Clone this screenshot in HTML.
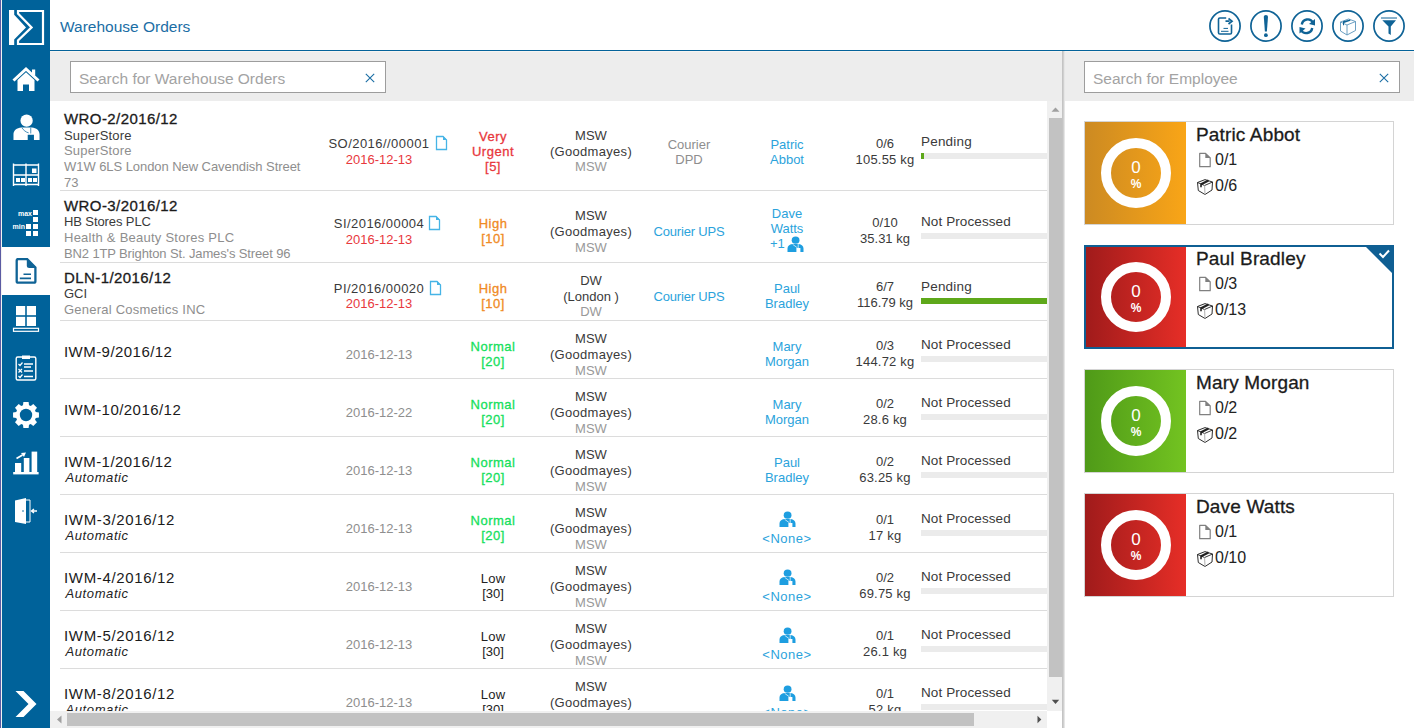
<!DOCTYPE html><html><head><meta charset="utf-8"><style>
*{margin:0;padding:0;box-sizing:border-box}
html,body{width:1414px;height:728px;overflow:hidden;background:#fff;font-family:"Liberation Sans", sans-serif;}
.a{position:absolute;white-space:nowrap}
.c{position:absolute;white-space:nowrap;text-align:center;transform:translateX(-50%)}
.t13{font-size:13px;line-height:16px}
</style></head><body>
<div class="a" style="left:0;top:0;width:50px;height:728px;background:#00629a"></div>
<div class="a" style="left:0;top:0;width:1px;height:728px;background:#5b5ba3"></div>
<div class="a" style="left:1px;top:0;width:1px;height:728px;background:#f2f2f2"></div>
<div class="a" style="left:2px;top:247px;width:48px;height:48px;background:#fff"></div>
<div class="a" style="left:60px;top:17px;font-size:15.5px;color:#1b6ea5;line-height:20px">Warehouse Orders</div>
<div class="a" style="left:50px;top:50px;width:1364px;height:1px;background:#04639a"></div>
<div class="a" style="left:50px;top:51px;width:1364px;height:1px;background:#f7f4f1"></div>
<div class="a" style="left:50px;top:52px;width:1364px;height:49px;background:#ededed"></div>
<div class="a" style="left:70px;top:61px;width:316px;height:32px;background:#fff;border:1px solid #9d9d9d"></div>
<div class="a" style="left:79px;top:70px;font-size:15.5px;line-height:18px;color:#a3a3a3">Search for Warehouse Orders</div>
<svg class="a" style="left:365px;top:73px" width="10" height="10" viewBox="0 0 10 10"><path d="M0.8 0.8L9.2 9.2M9.2 0.8L0.8 9.2" stroke="#1b6ea5" stroke-width="1.1"/></svg>
<div class="a" style="left:1084px;top:61px;width:316px;height:32px;background:#fff;border:1px solid #9d9d9d"></div>
<div class="a" style="left:1093px;top:70px;font-size:15.5px;line-height:18px;color:#a3a3a3">Search for Employee</div>
<svg class="a" style="left:1379px;top:73px" width="10" height="10" viewBox="0 0 10 10"><path d="M0.8 0.8L9.2 9.2M9.2 0.8L0.8 9.2" stroke="#1b6ea5" stroke-width="1.1"/></svg>
<div class="a" style="left:1062px;top:51px;width:1px;height:677px;background:#c4c4c4"></div>
<div class="a" style="left:1063px;top:51px;width:1px;height:677px;background:#d0d0d0"></div>
<div class="a" style="left:1064px;top:51px;width:1px;height:677px;background:#e6e6e6"></div>
<div class="a" style="left:60px;top:190px;width:987px;height:1px;background:#dcdcdc"></div>
<div class="a" style="left:60px;top:262px;width:987px;height:1px;background:#dcdcdc"></div>
<div class="a" style="left:60px;top:320px;width:987px;height:1px;background:#dcdcdc"></div>
<div class="a" style="left:60px;top:378px;width:987px;height:1px;background:#dcdcdc"></div>
<div class="a" style="left:60px;top:436px;width:987px;height:1px;background:#dcdcdc"></div>
<div class="a" style="left:60px;top:494px;width:987px;height:1px;background:#dcdcdc"></div>
<div class="a" style="left:60px;top:552px;width:987px;height:1px;background:#dcdcdc"></div>
<div class="a" style="left:60px;top:610px;width:987px;height:1px;background:#dcdcdc"></div>
<div class="a" style="left:60px;top:668px;width:987px;height:1px;background:#dcdcdc"></div>
<div class="a" style="left:50px;top:101px;width:997px;height:610px;overflow:hidden">
<div class="a" style="left:-50px;top:-101px;width:1414px;height:728px">
<div class="a" style="left:60px;top:190px;width:987px;height:1px;background:#dcdcdc"></div>
<div class="a" style="left:60px;top:262px;width:987px;height:1px;background:#dcdcdc"></div>
<div class="a" style="left:60px;top:320px;width:987px;height:1px;background:#dcdcdc"></div>
<div class="a" style="left:60px;top:378px;width:987px;height:1px;background:#dcdcdc"></div>
<div class="a" style="left:60px;top:436px;width:987px;height:1px;background:#dcdcdc"></div>
<div class="a" style="left:60px;top:494px;width:987px;height:1px;background:#dcdcdc"></div>
<div class="a" style="left:60px;top:552px;width:987px;height:1px;background:#dcdcdc"></div>
<div class="a" style="left:60px;top:610px;width:987px;height:1px;background:#dcdcdc"></div>
<div class="a" style="left:60px;top:668px;width:987px;height:1px;background:#dcdcdc"></div>
<div class="a" style="left:64px;top:111px;font-size:15px;line-height:15px;color:#1b1b1b;-webkit-text-stroke:0.3px currentColor;letter-spacing:0.42px">WRO-2/2016/12</div>
<div class="a" style="left:64px;top:129px;font-size:13px;line-height:13px;color:#3a3a3a;letter-spacing:0.2px">SuperStore</div>
<div class="a" style="left:64px;top:144px;font-size:13px;line-height:13px;color:#8e8e8e;letter-spacing:0.2px">SuperStore</div>
<div class="a" style="left:64px;top:160px;font-size:13px;line-height:13px;color:#8e8e8e;letter-spacing:-0.06px">W1W 6LS London New Cavendish Street</div>
<div class="a" style="left:64px;top:176px;font-size:13px;line-height:13px;color:#8e8e8e;">73</div>
<div class="a" style="left:279.0px;width:200px;text-align:center;top:137px;font-size:13px;line-height:13px;color:#3a3a3a;letter-spacing:0.45px">SO/2016//00001</div>
<svg class="a" style="left:435px;top:135px" width="13" height="16" viewBox="0 0 13 16"><path d="M1.5 1.5H8L11.5 5V14.5H1.5Z" fill="none" stroke="#46b4e6" stroke-width="1.3"/><path d="M8 1L12 5H8Z" fill="#46b4e6"/></svg>
<div class="a" style="left:279.0px;width:200px;text-align:center;top:153px;font-size:13px;line-height:13px;color:#e8383d;">2016-12-13</div>
<div class="a" style="left:393.0px;width:200px;text-align:center;top:130px;font-size:13px;line-height:13px;color:#e8383d;-webkit-text-stroke:0.3px currentColor;letter-spacing:0.5px">Very</div>
<div class="a" style="left:393.0px;width:200px;text-align:center;top:145px;font-size:13px;line-height:13px;color:#e8383d;-webkit-text-stroke:0.3px currentColor;letter-spacing:0.5px">Urgent</div>
<div class="a" style="left:393.0px;width:200px;text-align:center;top:160px;font-size:13px;line-height:13px;color:#e8383d;-webkit-text-stroke:0.3px currentColor;letter-spacing:0.5px">[5]</div>
<div class="a" style="left:491.0px;width:200px;text-align:center;top:129px;font-size:13px;line-height:13px;color:#3a3a3a;">MSW</div>
<div class="a" style="left:491.0px;width:200px;text-align:center;top:145px;font-size:13px;line-height:13px;color:#3a3a3a;letter-spacing:0.3px">(Goodmayes)</div>
<div class="a" style="left:491.0px;width:200px;text-align:center;top:160px;font-size:13px;line-height:13px;color:#999;">MSW</div>
<div class="a" style="left:589.0px;width:200px;text-align:center;top:138px;font-size:13px;line-height:13px;color:#8e8e8e;">Courier</div>
<div class="a" style="left:589.0px;width:200px;text-align:center;top:153px;font-size:13px;line-height:13px;color:#8e8e8e;">DPD</div>
<div class="a" style="left:687.0px;width:200px;text-align:center;top:138px;font-size:13px;line-height:13px;color:#2ba3dc;">Patric</div>
<div class="a" style="left:687.0px;width:200px;text-align:center;top:153px;font-size:13px;line-height:13px;color:#2ba3dc;">Abbot</div>
<div class="a" style="left:785.0px;width:200px;text-align:center;top:137px;font-size:13px;line-height:13px;color:#3a3a3a;">0/6</div>
<div class="a" style="left:785.0px;width:200px;text-align:center;top:153px;font-size:13px;line-height:13px;color:#3a3a3a;letter-spacing:0.2px">105.55 kg</div>
<div class="a" style="left:921px;top:135px;font-size:13.5px;line-height:13.5px;color:#3a3a3a;letter-spacing:0.2px">Pending</div>
<div class="a" style="left:921px;top:153px;width:126px;height:6px;background:#ebebeb"></div>
<div class="a" style="left:921px;top:153px;width:3px;height:6px;background:#5ea81a"></div>
<div class="a" style="left:64px;top:198px;font-size:15px;line-height:15px;color:#1b1b1b;-webkit-text-stroke:0.3px currentColor;letter-spacing:0.42px">WRO-3/2016/12</div>
<div class="a" style="left:64px;top:215px;font-size:13px;line-height:13px;color:#3a3a3a;letter-spacing:-0.1px">HB Stores PLC</div>
<div class="a" style="left:64px;top:231px;font-size:13px;line-height:13px;color:#8e8e8e;letter-spacing:0.24px">Health &amp; Beauty Stores PLC</div>
<div class="a" style="left:64px;top:247px;font-size:13px;line-height:13px;color:#8e8e8e;letter-spacing:-0.13px">BN2 1TP Brighton St. James's Street 96</div>
<div class="a" style="left:279.0px;width:200px;text-align:center;top:217px;font-size:13px;line-height:13px;color:#3a3a3a;letter-spacing:0.45px">SI/2016/00004</div>
<svg class="a" style="left:428px;top:215px" width="13" height="16" viewBox="0 0 13 16"><path d="M1.5 1.5H8L11.5 5V14.5H1.5Z" fill="none" stroke="#46b4e6" stroke-width="1.3"/><path d="M8 1L12 5H8Z" fill="#46b4e6"/></svg>
<div class="a" style="left:279.0px;width:200px;text-align:center;top:233px;font-size:13px;line-height:13px;color:#e8383d;">2016-12-13</div>
<div class="a" style="left:393.0px;width:200px;text-align:center;top:217px;font-size:13px;line-height:13px;color:#f08a24;-webkit-text-stroke:0.3px currentColor;letter-spacing:0.5px">High</div>
<div class="a" style="left:393.0px;width:200px;text-align:center;top:232px;font-size:13px;line-height:13px;color:#f08a24;-webkit-text-stroke:0.3px currentColor;letter-spacing:0.5px">[10]</div>
<div class="a" style="left:491.0px;width:200px;text-align:center;top:209px;font-size:13px;line-height:13px;color:#3a3a3a;">MSW</div>
<div class="a" style="left:491.0px;width:200px;text-align:center;top:225px;font-size:13px;line-height:13px;color:#3a3a3a;letter-spacing:0.3px">(Goodmayes)</div>
<div class="a" style="left:491.0px;width:200px;text-align:center;top:241px;font-size:13px;line-height:13px;color:#999;">MSW</div>
<div class="a" style="left:589.0px;width:200px;text-align:center;top:225px;font-size:13px;line-height:13px;color:#2ba3dc;letter-spacing:-0.2px">Courier UPS</div>
<div class="a" style="left:687.0px;width:200px;text-align:center;top:207px;font-size:13px;line-height:13px;color:#2ba3dc;">Dave</div>
<div class="a" style="left:687.0px;width:200px;text-align:center;top:222px;font-size:13px;line-height:13px;color:#2ba3dc;">Watts</div>
<div class="a" style="left:770px;top:237px;font-size:13px;line-height:13px;color:#2ba3dc;">+1</div>
<svg class="a" style="left:786.5px;top:236px" width="17" height="17" viewBox="0 0 17 17"><ellipse cx="8.6" cy="4.2" rx="3.9" ry="3.6" fill="#1e9ee0"/><path d="M0.5 15.9V12.6C0.5 10 2.5 8.2 5.3 8H11.7C14.5 8.2 16.5 10 16.5 12.6V15.9H13.4V12.1H9.4V15.9Z" fill="#1e9ee0"/><path d="M5.6 8.3L10.4 11.8M11.2 8V12" stroke="#fff" stroke-width="0.7" fill="none"/></svg>
<div class="a" style="left:785.0px;width:200px;text-align:center;top:216px;font-size:13px;line-height:13px;color:#3a3a3a;">0/10</div>
<div class="a" style="left:785.0px;width:200px;text-align:center;top:232px;font-size:13px;line-height:13px;color:#3a3a3a;">35.31 kg</div>
<div class="a" style="left:921px;top:215px;font-size:13.5px;line-height:13.5px;color:#3a3a3a;letter-spacing:0.1px">Not Processed</div>
<div class="a" style="left:921px;top:233px;width:126px;height:6px;background:#ebebeb"></div>
<div class="a" style="left:64px;top:270px;font-size:15px;line-height:15px;color:#1b1b1b;-webkit-text-stroke:0.3px currentColor;letter-spacing:0.42px">DLN-1/2016/12</div>
<div class="a" style="left:64px;top:287px;font-size:13px;line-height:13px;color:#3a3a3a;">GCI</div>
<div class="a" style="left:64px;top:303px;font-size:13px;line-height:13px;color:#8e8e8e;letter-spacing:0.23px">General Cosmetics INC</div>
<div class="a" style="left:279.0px;width:200px;text-align:center;top:282px;font-size:13px;line-height:13px;color:#3a3a3a;letter-spacing:0.45px">PI/2016/00020</div>
<svg class="a" style="left:429px;top:280px" width="13" height="16" viewBox="0 0 13 16"><path d="M1.5 1.5H8L11.5 5V14.5H1.5Z" fill="none" stroke="#46b4e6" stroke-width="1.3"/><path d="M8 1L12 5H8Z" fill="#46b4e6"/></svg>
<div class="a" style="left:279.0px;width:200px;text-align:center;top:297px;font-size:13px;line-height:13px;color:#e8383d;">2016-12-13</div>
<div class="a" style="left:393.0px;width:200px;text-align:center;top:282px;font-size:13px;line-height:13px;color:#f08a24;-webkit-text-stroke:0.3px currentColor;letter-spacing:0.5px">High</div>
<div class="a" style="left:393.0px;width:200px;text-align:center;top:297px;font-size:13px;line-height:13px;color:#f08a24;-webkit-text-stroke:0.3px currentColor;letter-spacing:0.5px">[10]</div>
<div class="a" style="left:491.0px;width:200px;text-align:center;top:274px;font-size:13px;line-height:13px;color:#3a3a3a;">DW</div>
<div class="a" style="left:491.0px;width:200px;text-align:center;top:290px;font-size:13px;line-height:13px;color:#3a3a3a;">(London )</div>
<div class="a" style="left:491.0px;width:200px;text-align:center;top:305px;font-size:13px;line-height:13px;color:#999;">DW</div>
<div class="a" style="left:589.0px;width:200px;text-align:center;top:290px;font-size:13px;line-height:13px;color:#2ba3dc;letter-spacing:-0.2px">Courier UPS</div>
<div class="a" style="left:687.0px;width:200px;text-align:center;top:282px;font-size:13px;line-height:13px;color:#2ba3dc;">Paul</div>
<div class="a" style="left:687.0px;width:200px;text-align:center;top:297px;font-size:13px;line-height:13px;color:#2ba3dc;">Bradley</div>
<div class="a" style="left:785.0px;width:200px;text-align:center;top:280px;font-size:13px;line-height:13px;color:#3a3a3a;">6/7</div>
<div class="a" style="left:785.0px;width:200px;text-align:center;top:296px;font-size:13px;line-height:13px;color:#3a3a3a;">116.79 kg</div>
<div class="a" style="left:921px;top:280px;font-size:13.5px;line-height:13.5px;color:#3a3a3a;letter-spacing:0.2px">Pending</div>
<div class="a" style="left:921px;top:298px;width:126px;height:6px;background:#ebebeb"></div>
<div class="a" style="left:921px;top:298px;width:126px;height:6px;background:#5ea81a"></div>
<div class="a" style="left:64px;top:344px;font-size:15px;line-height:15px;color:#1b1b1b;letter-spacing:0.45px">IWM-9/2016/12</div>
<div class="a" style="left:279.0px;width:200px;text-align:center;top:348px;font-size:13px;line-height:13px;color:#8e8e8e;">2016-12-13</div>
<div class="a" style="left:393.0px;width:200px;text-align:center;top:340px;font-size:13px;line-height:13px;color:#14e05c;-webkit-text-stroke:0.3px currentColor;letter-spacing:0.5px">Normal</div>
<div class="a" style="left:393.0px;width:200px;text-align:center;top:355px;font-size:13px;line-height:13px;color:#14e05c;-webkit-text-stroke:0.3px currentColor;letter-spacing:0.5px">[20]</div>
<div class="a" style="left:491.0px;width:200px;text-align:center;top:332px;font-size:13px;line-height:13px;color:#3a3a3a;">MSW</div>
<div class="a" style="left:491.0px;width:200px;text-align:center;top:348px;font-size:13px;line-height:13px;color:#3a3a3a;letter-spacing:0.3px">(Goodmayes)</div>
<div class="a" style="left:491.0px;width:200px;text-align:center;top:364px;font-size:13px;line-height:13px;color:#999;">MSW</div>
<div class="a" style="left:687.0px;width:200px;text-align:center;top:340px;font-size:13px;line-height:13px;color:#2ba3dc;">Mary</div>
<div class="a" style="left:687.0px;width:200px;text-align:center;top:355px;font-size:13px;line-height:13px;color:#2ba3dc;">Morgan</div>
<div class="a" style="left:785.0px;width:200px;text-align:center;top:339px;font-size:13px;line-height:13px;color:#3a3a3a;">0/3</div>
<div class="a" style="left:785.0px;width:200px;text-align:center;top:355px;font-size:13px;line-height:13px;color:#3a3a3a;letter-spacing:0.2px">144.72 kg</div>
<div class="a" style="left:921px;top:338px;font-size:13.5px;line-height:13.5px;color:#3a3a3a;letter-spacing:0.1px">Not Processed</div>
<div class="a" style="left:921px;top:356px;width:126px;height:6px;background:#ebebeb"></div>
<div class="a" style="left:64px;top:402px;font-size:15px;line-height:15px;color:#1b1b1b;letter-spacing:0.45px">IWM-10/2016/12</div>
<div class="a" style="left:279.0px;width:200px;text-align:center;top:406px;font-size:13px;line-height:13px;color:#8e8e8e;">2016-12-22</div>
<div class="a" style="left:393.0px;width:200px;text-align:center;top:398px;font-size:13px;line-height:13px;color:#14e05c;-webkit-text-stroke:0.3px currentColor;letter-spacing:0.5px">Normal</div>
<div class="a" style="left:393.0px;width:200px;text-align:center;top:413px;font-size:13px;line-height:13px;color:#14e05c;-webkit-text-stroke:0.3px currentColor;letter-spacing:0.5px">[20]</div>
<div class="a" style="left:491.0px;width:200px;text-align:center;top:390px;font-size:13px;line-height:13px;color:#3a3a3a;">MSW</div>
<div class="a" style="left:491.0px;width:200px;text-align:center;top:406px;font-size:13px;line-height:13px;color:#3a3a3a;letter-spacing:0.3px">(Goodmayes)</div>
<div class="a" style="left:491.0px;width:200px;text-align:center;top:422px;font-size:13px;line-height:13px;color:#999;">MSW</div>
<div class="a" style="left:687.0px;width:200px;text-align:center;top:398px;font-size:13px;line-height:13px;color:#2ba3dc;">Mary</div>
<div class="a" style="left:687.0px;width:200px;text-align:center;top:413px;font-size:13px;line-height:13px;color:#2ba3dc;">Morgan</div>
<div class="a" style="left:785.0px;width:200px;text-align:center;top:397px;font-size:13px;line-height:13px;color:#3a3a3a;">0/2</div>
<div class="a" style="left:785.0px;width:200px;text-align:center;top:413px;font-size:13px;line-height:13px;color:#3a3a3a;letter-spacing:0.2px">28.6 kg</div>
<div class="a" style="left:921px;top:396px;font-size:13.5px;line-height:13.5px;color:#3a3a3a;letter-spacing:0.1px">Not Processed</div>
<div class="a" style="left:921px;top:414px;width:126px;height:6px;background:#ebebeb"></div>
<div class="a" style="left:64px;top:454px;font-size:15px;line-height:15px;color:#1b1b1b;letter-spacing:0.45px">IWM-1/2016/12</div>
<div class="a" style="left:65.5px;top:471px;font-size:13px;line-height:13px;color:#222;font-style:italic;letter-spacing:0.6px">Automatic</div>
<div class="a" style="left:279.0px;width:200px;text-align:center;top:464px;font-size:13px;line-height:13px;color:#8e8e8e;">2016-12-13</div>
<div class="a" style="left:393.0px;width:200px;text-align:center;top:456px;font-size:13px;line-height:13px;color:#14e05c;-webkit-text-stroke:0.3px currentColor;letter-spacing:0.5px">Normal</div>
<div class="a" style="left:393.0px;width:200px;text-align:center;top:471px;font-size:13px;line-height:13px;color:#14e05c;-webkit-text-stroke:0.3px currentColor;letter-spacing:0.5px">[20]</div>
<div class="a" style="left:491.0px;width:200px;text-align:center;top:448px;font-size:13px;line-height:13px;color:#3a3a3a;">MSW</div>
<div class="a" style="left:491.0px;width:200px;text-align:center;top:464px;font-size:13px;line-height:13px;color:#3a3a3a;letter-spacing:0.3px">(Goodmayes)</div>
<div class="a" style="left:491.0px;width:200px;text-align:center;top:480px;font-size:13px;line-height:13px;color:#999;">MSW</div>
<div class="a" style="left:687.0px;width:200px;text-align:center;top:456px;font-size:13px;line-height:13px;color:#2ba3dc;">Paul</div>
<div class="a" style="left:687.0px;width:200px;text-align:center;top:471px;font-size:13px;line-height:13px;color:#2ba3dc;">Bradley</div>
<div class="a" style="left:785.0px;width:200px;text-align:center;top:455px;font-size:13px;line-height:13px;color:#3a3a3a;">0/2</div>
<div class="a" style="left:785.0px;width:200px;text-align:center;top:471px;font-size:13px;line-height:13px;color:#3a3a3a;letter-spacing:0.2px">63.25 kg</div>
<div class="a" style="left:921px;top:454px;font-size:13.5px;line-height:13.5px;color:#3a3a3a;letter-spacing:0.1px">Not Processed</div>
<div class="a" style="left:921px;top:472px;width:126px;height:6px;background:#ebebeb"></div>
<div class="a" style="left:64px;top:512px;font-size:15px;line-height:15px;color:#1b1b1b;letter-spacing:0.65px">IWM-3/2016/12</div>
<div class="a" style="left:65.5px;top:529px;font-size:13px;line-height:13px;color:#222;font-style:italic;letter-spacing:0.6px">Automatic</div>
<div class="a" style="left:279.0px;width:200px;text-align:center;top:522px;font-size:13px;line-height:13px;color:#8e8e8e;">2016-12-13</div>
<div class="a" style="left:393.0px;width:200px;text-align:center;top:514px;font-size:13px;line-height:13px;color:#14e05c;-webkit-text-stroke:0.3px currentColor;letter-spacing:0.5px">Normal</div>
<div class="a" style="left:393.0px;width:200px;text-align:center;top:529px;font-size:13px;line-height:13px;color:#14e05c;-webkit-text-stroke:0.3px currentColor;letter-spacing:0.5px">[20]</div>
<div class="a" style="left:491.0px;width:200px;text-align:center;top:506px;font-size:13px;line-height:13px;color:#3a3a3a;">MSW</div>
<div class="a" style="left:491.0px;width:200px;text-align:center;top:522px;font-size:13px;line-height:13px;color:#3a3a3a;letter-spacing:0.3px">(Goodmayes)</div>
<div class="a" style="left:491.0px;width:200px;text-align:center;top:538px;font-size:13px;line-height:13px;color:#999;">MSW</div>
<svg class="a" style="left:778.5px;top:511px" width="17" height="17" viewBox="0 0 17 17"><ellipse cx="8.6" cy="4.2" rx="3.9" ry="3.6" fill="#1e9ee0"/><path d="M0.5 15.9V12.6C0.5 10 2.5 8.2 5.3 8H11.7C14.5 8.2 16.5 10 16.5 12.6V15.9H13.4V12.1H9.4V15.9Z" fill="#1e9ee0"/><path d="M5.6 8.3L10.4 11.8M11.2 8V12" stroke="#fff" stroke-width="0.7" fill="none"/></svg>
<div class="a" style="left:687.0px;width:200px;text-align:center;top:532px;font-size:13px;line-height:13px;color:#2ba3dc;letter-spacing:0.5px">&lt;None&gt;</div>
<div class="a" style="left:785.0px;width:200px;text-align:center;top:513px;font-size:13px;line-height:13px;color:#3a3a3a;">0/1</div>
<div class="a" style="left:785.0px;width:200px;text-align:center;top:529px;font-size:13px;line-height:13px;color:#3a3a3a;letter-spacing:0.2px">17 kg</div>
<div class="a" style="left:921px;top:512px;font-size:13.5px;line-height:13.5px;color:#3a3a3a;letter-spacing:0.1px">Not Processed</div>
<div class="a" style="left:921px;top:530px;width:126px;height:6px;background:#ebebeb"></div>
<div class="a" style="left:64px;top:570px;font-size:15px;line-height:15px;color:#1b1b1b;letter-spacing:0.65px">IWM-4/2016/12</div>
<div class="a" style="left:65.5px;top:587px;font-size:13px;line-height:13px;color:#222;font-style:italic;letter-spacing:0.6px">Automatic</div>
<div class="a" style="left:279.0px;width:200px;text-align:center;top:580px;font-size:13px;line-height:13px;color:#8e8e8e;">2016-12-13</div>
<div class="a" style="left:393.0px;width:200px;text-align:center;top:572px;font-size:13px;line-height:13px;color:#222;letter-spacing:0.3px">Low</div>
<div class="a" style="left:393.0px;width:200px;text-align:center;top:587px;font-size:13px;line-height:13px;color:#222;">[30]</div>
<div class="a" style="left:491.0px;width:200px;text-align:center;top:564px;font-size:13px;line-height:13px;color:#3a3a3a;">MSW</div>
<div class="a" style="left:491.0px;width:200px;text-align:center;top:580px;font-size:13px;line-height:13px;color:#3a3a3a;letter-spacing:0.3px">(Goodmayes)</div>
<div class="a" style="left:491.0px;width:200px;text-align:center;top:596px;font-size:13px;line-height:13px;color:#999;">MSW</div>
<svg class="a" style="left:778.5px;top:569px" width="17" height="17" viewBox="0 0 17 17"><ellipse cx="8.6" cy="4.2" rx="3.9" ry="3.6" fill="#1e9ee0"/><path d="M0.5 15.9V12.6C0.5 10 2.5 8.2 5.3 8H11.7C14.5 8.2 16.5 10 16.5 12.6V15.9H13.4V12.1H9.4V15.9Z" fill="#1e9ee0"/><path d="M5.6 8.3L10.4 11.8M11.2 8V12" stroke="#fff" stroke-width="0.7" fill="none"/></svg>
<div class="a" style="left:687.0px;width:200px;text-align:center;top:590px;font-size:13px;line-height:13px;color:#2ba3dc;letter-spacing:0.5px">&lt;None&gt;</div>
<div class="a" style="left:785.0px;width:200px;text-align:center;top:571px;font-size:13px;line-height:13px;color:#3a3a3a;">0/2</div>
<div class="a" style="left:785.0px;width:200px;text-align:center;top:587px;font-size:13px;line-height:13px;color:#3a3a3a;letter-spacing:0.2px">69.75 kg</div>
<div class="a" style="left:921px;top:570px;font-size:13.5px;line-height:13.5px;color:#3a3a3a;letter-spacing:0.1px">Not Processed</div>
<div class="a" style="left:921px;top:588px;width:126px;height:6px;background:#ebebeb"></div>
<div class="a" style="left:64px;top:628px;font-size:15px;line-height:15px;color:#1b1b1b;letter-spacing:0.65px">IWM-5/2016/12</div>
<div class="a" style="left:65.5px;top:645px;font-size:13px;line-height:13px;color:#222;font-style:italic;letter-spacing:0.6px">Automatic</div>
<div class="a" style="left:279.0px;width:200px;text-align:center;top:638px;font-size:13px;line-height:13px;color:#8e8e8e;">2016-12-13</div>
<div class="a" style="left:393.0px;width:200px;text-align:center;top:630px;font-size:13px;line-height:13px;color:#222;letter-spacing:0.3px">Low</div>
<div class="a" style="left:393.0px;width:200px;text-align:center;top:645px;font-size:13px;line-height:13px;color:#222;">[30]</div>
<div class="a" style="left:491.0px;width:200px;text-align:center;top:622px;font-size:13px;line-height:13px;color:#3a3a3a;">MSW</div>
<div class="a" style="left:491.0px;width:200px;text-align:center;top:638px;font-size:13px;line-height:13px;color:#3a3a3a;letter-spacing:0.3px">(Goodmayes)</div>
<div class="a" style="left:491.0px;width:200px;text-align:center;top:654px;font-size:13px;line-height:13px;color:#999;">MSW</div>
<svg class="a" style="left:778.5px;top:627px" width="17" height="17" viewBox="0 0 17 17"><ellipse cx="8.6" cy="4.2" rx="3.9" ry="3.6" fill="#1e9ee0"/><path d="M0.5 15.9V12.6C0.5 10 2.5 8.2 5.3 8H11.7C14.5 8.2 16.5 10 16.5 12.6V15.9H13.4V12.1H9.4V15.9Z" fill="#1e9ee0"/><path d="M5.6 8.3L10.4 11.8M11.2 8V12" stroke="#fff" stroke-width="0.7" fill="none"/></svg>
<div class="a" style="left:687.0px;width:200px;text-align:center;top:648px;font-size:13px;line-height:13px;color:#2ba3dc;letter-spacing:0.5px">&lt;None&gt;</div>
<div class="a" style="left:785.0px;width:200px;text-align:center;top:629px;font-size:13px;line-height:13px;color:#3a3a3a;">0/1</div>
<div class="a" style="left:785.0px;width:200px;text-align:center;top:645px;font-size:13px;line-height:13px;color:#3a3a3a;letter-spacing:0.2px">26.1 kg</div>
<div class="a" style="left:921px;top:628px;font-size:13.5px;line-height:13.5px;color:#3a3a3a;letter-spacing:0.1px">Not Processed</div>
<div class="a" style="left:921px;top:646px;width:126px;height:6px;background:#ebebeb"></div>
<div class="a" style="left:64px;top:686px;font-size:15px;line-height:15px;color:#1b1b1b;letter-spacing:0.65px">IWM-8/2016/12</div>
<div class="a" style="left:65.5px;top:703px;font-size:13px;line-height:13px;color:#222;font-style:italic;letter-spacing:0.6px">Automatic</div>
<div class="a" style="left:279.0px;width:200px;text-align:center;top:696px;font-size:13px;line-height:13px;color:#8e8e8e;">2016-12-13</div>
<div class="a" style="left:393.0px;width:200px;text-align:center;top:688px;font-size:13px;line-height:13px;color:#222;letter-spacing:0.3px">Low</div>
<div class="a" style="left:393.0px;width:200px;text-align:center;top:703px;font-size:13px;line-height:13px;color:#222;">[30]</div>
<div class="a" style="left:491.0px;width:200px;text-align:center;top:680px;font-size:13px;line-height:13px;color:#3a3a3a;">MSW</div>
<div class="a" style="left:491.0px;width:200px;text-align:center;top:696px;font-size:13px;line-height:13px;color:#3a3a3a;letter-spacing:0.3px">(Goodmayes)</div>
<div class="a" style="left:491.0px;width:200px;text-align:center;top:712px;font-size:13px;line-height:13px;color:#999;">MSW</div>
<svg class="a" style="left:778.5px;top:685px" width="17" height="17" viewBox="0 0 17 17"><ellipse cx="8.6" cy="4.2" rx="3.9" ry="3.6" fill="#1e9ee0"/><path d="M0.5 15.9V12.6C0.5 10 2.5 8.2 5.3 8H11.7C14.5 8.2 16.5 10 16.5 12.6V15.9H13.4V12.1H9.4V15.9Z" fill="#1e9ee0"/><path d="M5.6 8.3L10.4 11.8M11.2 8V12" stroke="#fff" stroke-width="0.7" fill="none"/></svg>
<div class="a" style="left:687.0px;width:200px;text-align:center;top:706px;font-size:13px;line-height:13px;color:#2ba3dc;letter-spacing:0.5px">&lt;None&gt;</div>
<div class="a" style="left:785.0px;width:200px;text-align:center;top:687px;font-size:13px;line-height:13px;color:#3a3a3a;">0/1</div>
<div class="a" style="left:785.0px;width:200px;text-align:center;top:703px;font-size:13px;line-height:13px;color:#3a3a3a;letter-spacing:0.2px">52 kg</div>
<div class="a" style="left:921px;top:686px;font-size:13.5px;line-height:13.5px;color:#3a3a3a;letter-spacing:0.1px">Not Processed</div>
<div class="a" style="left:921px;top:704px;width:126px;height:6px;background:#ebebeb"></div>
</div></div>
<div class="a" style="left:1047px;top:101px;width:15px;height:610px;background:#f0f0f0"></div>
<div class="a" style="left:1049px;top:118px;width:13px;height:559px;background:#c2c2c2"></div>
<svg class="a" style="left:1051px;top:106px" width="9" height="6"><path d="M0.5 5.8L4.5 1.6L8.5 5.8Z" fill="#a0a0a0"/></svg>
<svg class="a" style="left:1051px;top:699px" width="9" height="6"><path d="M0.8 0.8L4.5 5L8.2 0.8Z" fill="#505050"/></svg>
<div class="a" style="left:50px;top:711px;width:997px;height:17px;background:#f0f0f0"></div>
<div class="a" style="left:67px;top:713px;width:907px;height:13px;background:#c2c2c2"></div>
<svg class="a" style="left:56px;top:715px" width="6" height="9"><path d="M5.5 0.5L1 4.5L5.5 8.5Z" fill="#a0a0a0"/></svg>
<svg class="a" style="left:1037px;top:715px" width="6" height="9"><path d="M0.5 0.8L4.3 4.5L0.5 8.2Z" fill="#505050"/></svg>
<div class="a" style="left:1084px;top:121px;width:310px;height:104px;border:1px solid #d4d4d4;background:#fff"></div>
<div class="a" style="left:1085px;top:122px;width:101px;height:102px;background:linear-gradient(90deg,#cc8a22,#f9a517)"></div>
<div class="a" style="left:1101px;top:138px;width:70px;height:70px;border-radius:50%;border:10px solid #fff"></div>
<div class="a" style="left:1106.0px;width:60px;text-align:center;top:159px;font-size:17px;line-height:17px;color:#fff;">0</div>
<div class="a" style="left:1106.0px;width:60px;text-align:center;top:178px;font-size:12px;line-height:12px;color:#fff;font-weight:bold">%</div>
<div class="a" style="left:1196px;top:125px;font-size:19px;line-height:19px;color:#1b1b1b;-webkit-text-stroke:0.3px currentColor;letter-spacing:0.15px">Patric Abbot</div>
<svg class="a" style="left:1198px;top:152px" width="14" height="16" viewBox="0 0 14 16"><path d="M1.7 1.3H7.5L12.2 6V14.7H1.7Z" fill="none" stroke="#808080" stroke-width="1.2" stroke-linejoin="round"/><path d="M7.3 0.8L12.6 6.1H7.3Z" fill="#808080"/></svg>
<div class="a" style="left:1215px;top:152px;font-size:16px;line-height:16px;color:#222;">0/1</div>
<svg class="a" style="left:1196px;top:179px" width="18" height="17" viewBox="0 0 18 17"><path d="M1.5 3.5L9 0.6L16.5 3L16 11L9 15.5L2.3 11.5Z" fill="none" stroke="#222" stroke-width="0.95" stroke-linejoin="round"/><path d="M1.5 3.5L8.6 6.5L16.5 3" fill="none" stroke="#222" stroke-width="0.9"/><path d="M8.6 6.5L9 15.5" fill="none" stroke="#b0b0b0" stroke-width="1"/><path d="M4.6 5.6L12.5 1.6" stroke="#222" stroke-width="2.2"/><path d="M5 5.2V8.3" stroke="#222" stroke-width="1.6"/></svg>
<div class="a" style="left:1215px;top:178px;font-size:16px;line-height:16px;color:#222;">0/6</div>
<div class="a" style="left:1084px;top:245px;width:310px;height:104px;border:2px solid #0f5f93;background:#fff"></div>
<svg class="a" style="left:1366px;top:247px" width="26" height="26"><path d="M0 0H26V26Z" fill="#0f5f93"/><path d="M13.5 6.5L17 10L23 3.5" fill="none" stroke="#fff" stroke-width="2"/></svg>
<div class="a" style="left:1086px;top:247px;width:100px;height:100px;background:linear-gradient(90deg,#a01b1b,#e62e27)"></div>
<div class="a" style="left:1101px;top:262px;width:70px;height:70px;border-radius:50%;border:10px solid #fff"></div>
<div class="a" style="left:1106.0px;width:60px;text-align:center;top:283px;font-size:17px;line-height:17px;color:#fff;">0</div>
<div class="a" style="left:1106.0px;width:60px;text-align:center;top:302px;font-size:12px;line-height:12px;color:#fff;font-weight:bold">%</div>
<div class="a" style="left:1196px;top:249px;font-size:19px;line-height:19px;color:#1b1b1b;-webkit-text-stroke:0.3px currentColor;letter-spacing:0.15px">Paul Bradley</div>
<svg class="a" style="left:1198px;top:276px" width="14" height="16" viewBox="0 0 14 16"><path d="M1.7 1.3H7.5L12.2 6V14.7H1.7Z" fill="none" stroke="#808080" stroke-width="1.2" stroke-linejoin="round"/><path d="M7.3 0.8L12.6 6.1H7.3Z" fill="#808080"/></svg>
<div class="a" style="left:1215px;top:276px;font-size:16px;line-height:16px;color:#222;">0/3</div>
<svg class="a" style="left:1196px;top:303px" width="18" height="17" viewBox="0 0 18 17"><path d="M1.5 3.5L9 0.6L16.5 3L16 11L9 15.5L2.3 11.5Z" fill="none" stroke="#222" stroke-width="0.95" stroke-linejoin="round"/><path d="M1.5 3.5L8.6 6.5L16.5 3" fill="none" stroke="#222" stroke-width="0.9"/><path d="M8.6 6.5L9 15.5" fill="none" stroke="#b0b0b0" stroke-width="1"/><path d="M4.6 5.6L12.5 1.6" stroke="#222" stroke-width="2.2"/><path d="M5 5.2V8.3" stroke="#222" stroke-width="1.6"/></svg>
<div class="a" style="left:1215px;top:302px;font-size:16px;line-height:16px;color:#222;">0/13</div>
<div class="a" style="left:1084px;top:369px;width:310px;height:104px;border:1px solid #d4d4d4;background:#fff"></div>
<div class="a" style="left:1085px;top:370px;width:101px;height:102px;background:linear-gradient(90deg,#4f9a18,#73c321)"></div>
<div class="a" style="left:1101px;top:386px;width:70px;height:70px;border-radius:50%;border:10px solid #fff"></div>
<div class="a" style="left:1106.0px;width:60px;text-align:center;top:407px;font-size:17px;line-height:17px;color:#fff;">0</div>
<div class="a" style="left:1106.0px;width:60px;text-align:center;top:426px;font-size:12px;line-height:12px;color:#fff;font-weight:bold">%</div>
<div class="a" style="left:1196px;top:373px;font-size:19px;line-height:19px;color:#1b1b1b;-webkit-text-stroke:0.3px currentColor;letter-spacing:0.15px">Mary Morgan</div>
<svg class="a" style="left:1198px;top:400px" width="14" height="16" viewBox="0 0 14 16"><path d="M1.7 1.3H7.5L12.2 6V14.7H1.7Z" fill="none" stroke="#808080" stroke-width="1.2" stroke-linejoin="round"/><path d="M7.3 0.8L12.6 6.1H7.3Z" fill="#808080"/></svg>
<div class="a" style="left:1215px;top:400px;font-size:16px;line-height:16px;color:#222;">0/2</div>
<svg class="a" style="left:1196px;top:427px" width="18" height="17" viewBox="0 0 18 17"><path d="M1.5 3.5L9 0.6L16.5 3L16 11L9 15.5L2.3 11.5Z" fill="none" stroke="#222" stroke-width="0.95" stroke-linejoin="round"/><path d="M1.5 3.5L8.6 6.5L16.5 3" fill="none" stroke="#222" stroke-width="0.9"/><path d="M8.6 6.5L9 15.5" fill="none" stroke="#b0b0b0" stroke-width="1"/><path d="M4.6 5.6L12.5 1.6" stroke="#222" stroke-width="2.2"/><path d="M5 5.2V8.3" stroke="#222" stroke-width="1.6"/></svg>
<div class="a" style="left:1215px;top:426px;font-size:16px;line-height:16px;color:#222;">0/2</div>
<div class="a" style="left:1084px;top:493px;width:310px;height:104px;border:1px solid #d4d4d4;background:#fff"></div>
<div class="a" style="left:1085px;top:494px;width:101px;height:102px;background:linear-gradient(90deg,#a01b1b,#e62e27)"></div>
<div class="a" style="left:1101px;top:510px;width:70px;height:70px;border-radius:50%;border:10px solid #fff"></div>
<div class="a" style="left:1106.0px;width:60px;text-align:center;top:531px;font-size:17px;line-height:17px;color:#fff;">0</div>
<div class="a" style="left:1106.0px;width:60px;text-align:center;top:550px;font-size:12px;line-height:12px;color:#fff;font-weight:bold">%</div>
<div class="a" style="left:1196px;top:497px;font-size:19px;line-height:19px;color:#1b1b1b;-webkit-text-stroke:0.3px currentColor;letter-spacing:0.15px">Dave Watts</div>
<svg class="a" style="left:1198px;top:524px" width="14" height="16" viewBox="0 0 14 16"><path d="M1.7 1.3H7.5L12.2 6V14.7H1.7Z" fill="none" stroke="#808080" stroke-width="1.2" stroke-linejoin="round"/><path d="M7.3 0.8L12.6 6.1H7.3Z" fill="#808080"/></svg>
<div class="a" style="left:1215px;top:524px;font-size:16px;line-height:16px;color:#222;">0/1</div>
<svg class="a" style="left:1196px;top:551px" width="18" height="17" viewBox="0 0 18 17"><path d="M1.5 3.5L9 0.6L16.5 3L16 11L9 15.5L2.3 11.5Z" fill="none" stroke="#222" stroke-width="0.95" stroke-linejoin="round"/><path d="M1.5 3.5L8.6 6.5L16.5 3" fill="none" stroke="#222" stroke-width="0.9"/><path d="M8.6 6.5L9 15.5" fill="none" stroke="#b0b0b0" stroke-width="1"/><path d="M4.6 5.6L12.5 1.6" stroke="#222" stroke-width="2.2"/><path d="M5 5.2V8.3" stroke="#222" stroke-width="1.6"/></svg>
<div class="a" style="left:1215px;top:550px;font-size:16px;line-height:16px;color:#222;">0/10</div>
<svg class="a" style="left:0px;top:0px" width="50" height="50" viewBox="0 0 50 50"><path d="M9 10H14.2V14.8L26 27.4L14.2 39.6V45H9Z" fill="#fff"/><path d="M18 11H43V44H18V40.5L31.6 27.4L18 13.6Z" fill="none" stroke="#fff" stroke-width="2.2"/></svg>
<svg class="a" style="left:0px;top:60px" width="50" height="40" viewBox="0 60 50 40"><path d="M13.5 80.5L26 69L38.5 80.5" fill="none" stroke="#fff" stroke-width="3"/><rect x="32" y="69.5" width="3.2" height="6" fill="#fff"/><path d="M17.5 80L26 72.3L34.5 80V91H29V84.5H23V91H17.5Z" fill="#fff"/></svg>
<svg class="a" style="left:12.5px;top:114px" width="27.2" height="27.2" viewBox="0 0 17 17"><ellipse cx="8.5" cy="4.2" rx="3.85" ry="3.85" fill="#fff"/><path d="M0.3 16.2V12.8C0.3 10.2 2.4 8.6 5.2 8.4H11.8C14.6 8.6 16.6 10.2 16.6 12.8V16.2H13.1V12.9H9.2V16.2Z" fill="#fff"/><path d="M5.6 8.7C6.5 10 8 11.4 9.8 11.8M11.1 8.6V12.2" stroke="#00629a" stroke-width="0.45" fill="none"/></svg>
<svg class="a" style="left:0px;top:160px" width="50" height="30" viewBox="0 160 50 30"><path d="M13.5 163.5V186M38.5 163.5V186M26 163.5V186M13 165H39M13 175H39M13 184.5H39" stroke="#fff" stroke-width="1.4" fill="none"/><rect x="32" y="168.5" width="4.5" height="4.5" fill="#fff"/><rect x="16" y="178" width="4" height="4" fill="#fff"/><rect x="21" y="178" width="4" height="4" fill="#fff"/><rect x="28" y="178" width="4" height="4" fill="#fff"/><rect x="33" y="178" width="4" height="4" fill="#fff"/></svg>
<svg class="a" style="left:0px;top:205px" width="50" height="35" viewBox="0 205 50 35"><text x="18" y="216" font-size="7" font-weight="bold" fill="#fff" font-family="Liberation Sans">max</text><text x="12.5" y="229" font-size="7" font-weight="bold" fill="#fff" font-family="Liberation Sans">min</text><rect x="33" y="210" width="5" height="5" fill="#fff"/><rect x="33" y="217" width="5" height="5" fill="#fff"/><rect x="26" y="224" width="5" height="5" fill="#fff"/><rect x="33" y="224" width="5" height="5" fill="#fff"/><rect x="26" y="231" width="5" height="5" fill="#fff"/><rect x="33" y="231" width="5" height="5" fill="#fff"/></svg>
<svg class="a" style="left:0px;top:250px" width="50" height="40" viewBox="0 250 50 40"><path d="M16.7 259.2H27.2L35.4 267.4V281.2Q35.4 282.7 33.9 282.7H18.2Q16.7 282.7 16.7 281.2V260.7Q16.7 259.2 18.2 259.2Z" fill="none" stroke="#0f6396" stroke-width="2.3"/><path d="M26.8 258.5V265.5Q26.8 268 29.3 268H36.2Z" fill="#0f6396"/><path d="M23.5 274.3H31M19.8 278.4H31" stroke="#0f6396" stroke-width="1.6"/></svg>
<svg class="a" style="left:0px;top:300px" width="50" height="35" viewBox="0 300 50 35"><rect x="16" y="306" width="9.2" height="9.2" fill="#fff"/><rect x="26.8" y="306" width="9.2" height="9.2" fill="#fff"/><rect x="16" y="316.8" width="9.2" height="9.2" fill="#fff"/><rect x="26.8" y="316.8" width="9.2" height="9.2" fill="#fff"/><rect x="13.5" y="328.3" width="25" height="3" fill="none" stroke="#fff" stroke-width="1.2"/></svg>
<svg class="a" style="left:0px;top:350px" width="50" height="35" viewBox="0 350 50 35"><rect x="16.2" y="357" width="19.6" height="23" rx="1.5" fill="none" stroke="#fff" stroke-width="1.4"/><path d="M22 355.5H30V359H22Z" fill="#fff"/><path d="M18.5 364L20 365.5L22.5 362.5M18.5 369L22 372.5M22 369L18.5 372.5M18.5 376L20 377.5L22.5 374.5" stroke="#fff" stroke-width="1.2" fill="none"/><path d="M24 364H33M24 367H31M24 371H33M24 376.5H33" stroke="#fff" stroke-width="1.3"/></svg>
<svg class="a" style="left:0px;top:398px" width="50" height="35" viewBox="0 398 50 35"><path d="M35.74 411.99 L38.94 412.38 L38.94 417.62 L35.74 418.01 L35.02 419.76 L37.00 422.29 L33.29 426.00 L30.76 424.02 L29.01 424.74 L28.62 427.94 L23.38 427.94 L22.99 424.74 L21.24 424.02 L18.71 426.00 L15.00 422.29 L16.98 419.76 L16.26 418.01 L13.06 417.62 L13.06 412.38 L16.26 411.99 L16.98 410.24 L15.00 407.71 L18.71 404.00 L21.24 405.98 L22.99 405.26 L23.38 402.06 L28.62 402.06 L29.01 405.26 L30.76 405.98 L33.29 404.00 L37.00 407.71 L35.02 410.24Z" fill="#fff"/><circle cx="26" cy="415" r="6.2" fill="#00629a"/></svg>
<svg class="a" style="left:0px;top:445px" width="50" height="35" viewBox="0 445 50 35"><rect x="15" y="463" width="6.2" height="9" fill="#fff"/><rect x="23.8" y="458" width="5.6" height="14" fill="#fff"/><rect x="31.6" y="451.6" width="5.6" height="20.4" fill="#fff"/><rect x="13.2" y="472" width="25.4" height="2.4" fill="#fff"/><path d="M16.5 458.5L22.5 455" stroke="#fff" stroke-width="1.8"/><path d="M21 453L26 452.5L24 457Z" fill="#fff"/></svg>
<svg class="a" style="left:0px;top:495px" width="50" height="35" viewBox="0 495 50 35"><path d="M15 500.5L26 498V524L15 522Z" fill="#fff"/><path d="M26 500H30V522H26" fill="none" stroke="#fff" stroke-width="1"/><circle cx="23" cy="511" r="0.8" fill="#00629a"/><path d="M37 511H32M34 509L31.5 511L34 513" stroke="#fff" stroke-width="1.4" fill="none"/></svg>
<svg class="a" style="left:0px;top:685px" width="50" height="40" viewBox="0 685 50 40"><path d="M15.5 691H23.5L36.5 704L23.5 717H15.5L28.5 704Z" fill="#fff"/></svg>
<svg class="a" style="left:1208px;top:9px" width="34" height="34" viewBox="0 0 34 34"><circle cx="17" cy="17" r="15.1" fill="none" stroke="#0f6396" stroke-width="1.7"/></svg>
<svg class="a" style="left:1249px;top:9px" width="34" height="34" viewBox="0 0 34 34"><circle cx="17" cy="17" r="15.1" fill="none" stroke="#0f6396" stroke-width="1.7"/></svg>
<svg class="a" style="left:1290px;top:9px" width="34" height="34" viewBox="0 0 34 34"><circle cx="17" cy="17" r="15.1" fill="none" stroke="#0f6396" stroke-width="1.7"/></svg>
<svg class="a" style="left:1331px;top:9px" width="34" height="34" viewBox="0 0 34 34"><circle cx="17" cy="17" r="15.1" fill="none" stroke="#0f6396" stroke-width="1.7"/></svg>
<svg class="a" style="left:1372px;top:9px" width="34" height="34" viewBox="0 0 34 34"><circle cx="17" cy="17" r="15.1" fill="none" stroke="#0f6396" stroke-width="1.7"/></svg>
<svg class="a" style="left:1200px;top:0px" width="60" height="50" viewBox="1200 0 60 50"><path d="M226.2 18H219.8Q218.5 18 218.5 19.3V32.7Q218.5 34 219.8 34H230.2Q231.5 34 231.5 32.7V24.5" transform="translate(1000 0)" fill="none" stroke="#0f6396" stroke-width="1.6"/><path d="M1225.5 21.2H1229.5M1228.5 18.5L1232 21.2L1228.5 24" stroke="#0f6396" stroke-width="1.7" fill="none"/><path d="M1223.5 28.4H1228M1221 31.3H1228.5" stroke="#0f6396" stroke-width="1"/></svg>
<svg class="a" style="left:1250px;top:0px" width="40" height="50" viewBox="1250 0 40 50"><path d="M1263.8 16.8Q1263.8 15 1265.9 15Q1268 15 1268 16.8L1266.9 31.6H1264.9Z" fill="#0f6396"/><circle cx="1265.9" cy="35.2" r="1.9" fill="#0f6396"/></svg>
<svg class="a" style="left:1290px;top:0px" width="40" height="50" viewBox="1290 0 40 50"><path d="M1301.8 24.5A6 6 0 0 1 1313 22.5" fill="none" stroke="#0f6396" stroke-width="2.4"/><path d="M1315 19L1315 25.5L1309 24Z" fill="#0f6396"/><path d="M1312.2 28A6 6 0 0 1 1301 30" fill="none" stroke="#0f6396" stroke-width="2.4"/><path d="M1299.5 33.5L1299.5 27L1305.5 28.5Z" fill="#0f6396"/></svg>
<svg class="a" style="left:1330px;top:0px" width="40" height="50" viewBox="1330 0 40 50"><path d="M1340.5 22L1348.5 19L1355.5 21.5V30.5L1347 35L1340.5 31Z" fill="none" stroke="#5a94bb" stroke-width="0.9"/><path d="M1340.5 22L1347 25L1355.5 21.5M1347 25V35" fill="none" stroke="#5a94bb" stroke-width="0.9"/><path d="M1343 21.2L1350 19.5L1350.5 20.8L1344 23V25.5L1343 25Z" fill="#0f6396"/></svg>
<svg class="a" style="left:1370px;top:0px" width="40" height="50" viewBox="1370 0 40 50"><path d="M1381 18H1397" stroke="#0f6396" stroke-width="1"/><path d="M1382.3 20.3H1396L1390.8 26.5V35L1388.5 33.5V26.5Z" fill="#0f6396"/></svg>
</body></html>
